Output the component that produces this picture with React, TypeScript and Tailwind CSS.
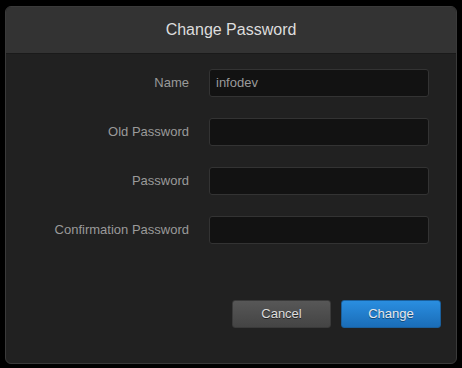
export default function App() {
  const fields = [
    { label: "Name", value: "infodev" },
    { label: "Old Password", value: "" },
    { label: "Password", value: "" },
    { label: "Confirmation Password", value: "" },
  ];

  return (
    <div className="h-[368px] w-[462px] bg-black pl-[5px] pt-[6px] font-['Liberation_Sans',Arial,sans-serif]">
      <div className="flex h-[358px] w-[452px] flex-col overflow-hidden rounded-[6px] border border-[#3a3a3a] bg-[#212121]">
        <div className="flex h-[47px] shrink-0 items-center justify-center border-b border-[#1a1a1a] bg-[#333333] text-[16px] text-[#dddddd]">
          Change Password
        </div>

        <div className="flex flex-col gap-[21px] pt-[15px]">
          {fields.map((f) => (
            <div key={f.label} className="flex items-center">
              <label className="w-[183px] shrink-0 text-right text-[13px] text-[#9a9a9a]">
                {f.label}
              </label>
              <div className="ml-[20px] flex h-[28px] w-[220px] items-center rounded-[3px] border border-[#333333] bg-[#121212] px-[6px] text-[13px] text-[#9a9a9a]">
                {f.value}
              </div>
            </div>
          ))}
        </div>

        <div className="mt-[56px] flex justify-end gap-[10px] pr-[15px]">
          <button className="h-[28px] w-[99px] rounded-[3px] border border-[#3a3a3a] bg-gradient-to-b from-[#575757] to-[#444444] text-[13px] text-[#dddddd] [text-shadow:0_1px_0_#222]">
            Cancel
          </button>
          <button className="h-[28px] w-[100px] rounded-[3px] border border-[#1a5f9c] bg-gradient-to-b from-[#2a8ee0] to-[#1a6db8] text-[13px] text-[#e8e8e8] [text-shadow:0_1px_0_#124a7c]">
            Change
          </button>
        </div>
      </div>
    </div>
  );
}
